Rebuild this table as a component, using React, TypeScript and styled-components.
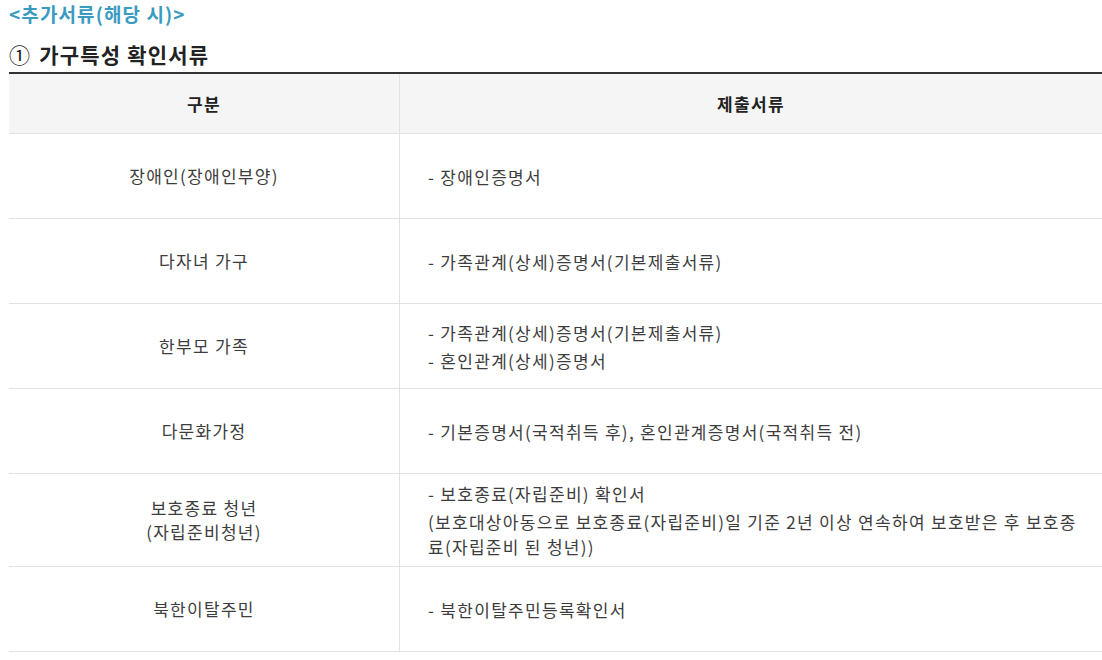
import styled, { createGlobalStyle } from 'styled-components';

const GlobalStyle = createGlobalStyle`
    body {
        margin: 0;
        background: #fff;
        font-family: "Noto Sans CJK KR", "Noto Sans", sans-serif;
        color: #3d3d3d;
    }
`

const Page = styled.div`
    padding-left: 9px;
    width: 1093px;
`

const Title = styled.h3`
    margin: 0;
    height: 28px;
    line-height: 28px;
    font-size: 19px;
    font-weight: 700;
    color: #3a9bc1;
    letter-spacing: 1.1px;
`

const SubTitle = styled.h4`
    margin: 0;
    padding-top: 11px;
    height: 44px;
    line-height: 30px;
    font-size: 21px;
    font-weight: 700;
    color: #222;
    letter-spacing: 1.2px;
    box-sizing: border-box;
`

const Circled = styled.span`
    font-weight: 400;
    margin-right: 2px;
`

const Table = styled.table`
    width: 1093px;
    border-collapse: collapse;
    border-top: 2px solid #333;
    table-layout: fixed;
    font-size: 17px;
    letter-spacing: 1.3px;
`

const HeadCell = styled.th<{ $w?: number }>`
    width: ${p => p.$w ? `${p.$w}px` : 'auto'};
    height: 59px;
    background: #f5f5f5;
    color: #222;
    font-weight: 700;
    font-size: 17px;
    text-align: center;
    border-bottom: 1px solid #e2e2e2;
    & + & { border-left: 1px solid #e2e2e2; }
    padding: 0;
`

const Row = styled.tr`
    border-bottom: 1px solid #e2e2e2;
`

const LabelCell = styled.td`
    height: 84px;
    padding: 0 10px;
    text-align: center;
    vertical-align: middle;
    line-height: 24px;
    color: #3d3d3d;
    border-right: 1px solid #e2e2e2;
`

const DocCell = styled.td`
    padding: 7px 20px 7px 28px;
    vertical-align: middle;
    line-height: 25px;
    color: #3d3d3d;
`

const Item = styled.p`
    margin: 0;
    & + & { margin-top: 3px; }
`

const rows: { label: string[]; docs: string[] }[] = [
    { label: ['장애인(장애인부양)'], docs: ['- 장애인증명서'] },
    { label: ['다자녀 가구'], docs: ['- 가족관계(상세)증명서(기본제출서류)'] },
    { label: ['한부모 가족'], docs: ['- 가족관계(상세)증명서(기본제출서류)', '- 혼인관계(상세)증명서'] },
    { label: ['다문화가정'], docs: ['- 기본증명서(국적취득 후), 혼인관계증명서(국적취득 전)'] },
    {
        label: ['보호종료 청년', '(자립준비청년)'],
        docs: [
            '- 보호종료(자립준비) 확인서',
            '(보호대상아동으로 보호종료(자립준비)일 기준 2년 이상 연속하여 보호받은 후 보호종료(자립준비 된 청년))',
        ],
    },
    { label: ['북한이탈주민'], docs: ['- 북한이탈주민등록확인서'] },
]

const App = () => (
    <>
        <GlobalStyle />
        <Page>
            <Title>&lt;추가서류(해당 시)&gt;</Title>
            <SubTitle><Circled>①</Circled> 가구특성 확인서류</SubTitle>
            <Table>
                <thead>
                    <tr>
                        <HeadCell $w={390}>구분</HeadCell>
                        <HeadCell>제출서류</HeadCell>
                    </tr>
                </thead>
                <tbody>
                    {rows.map((row, i) => (
                        <Row key={i}>
                            <LabelCell>
                                {row.label.map((l, j) => <div key={j}>{l}</div>)}
                            </LabelCell>
                            <DocCell>
                                {row.docs.map((d, j) => <Item key={j}>{d}</Item>)}
                            </DocCell>
                        </Row>
                    ))}
                </tbody>
            </Table>
        </Page>
    </>
);

export default App;
